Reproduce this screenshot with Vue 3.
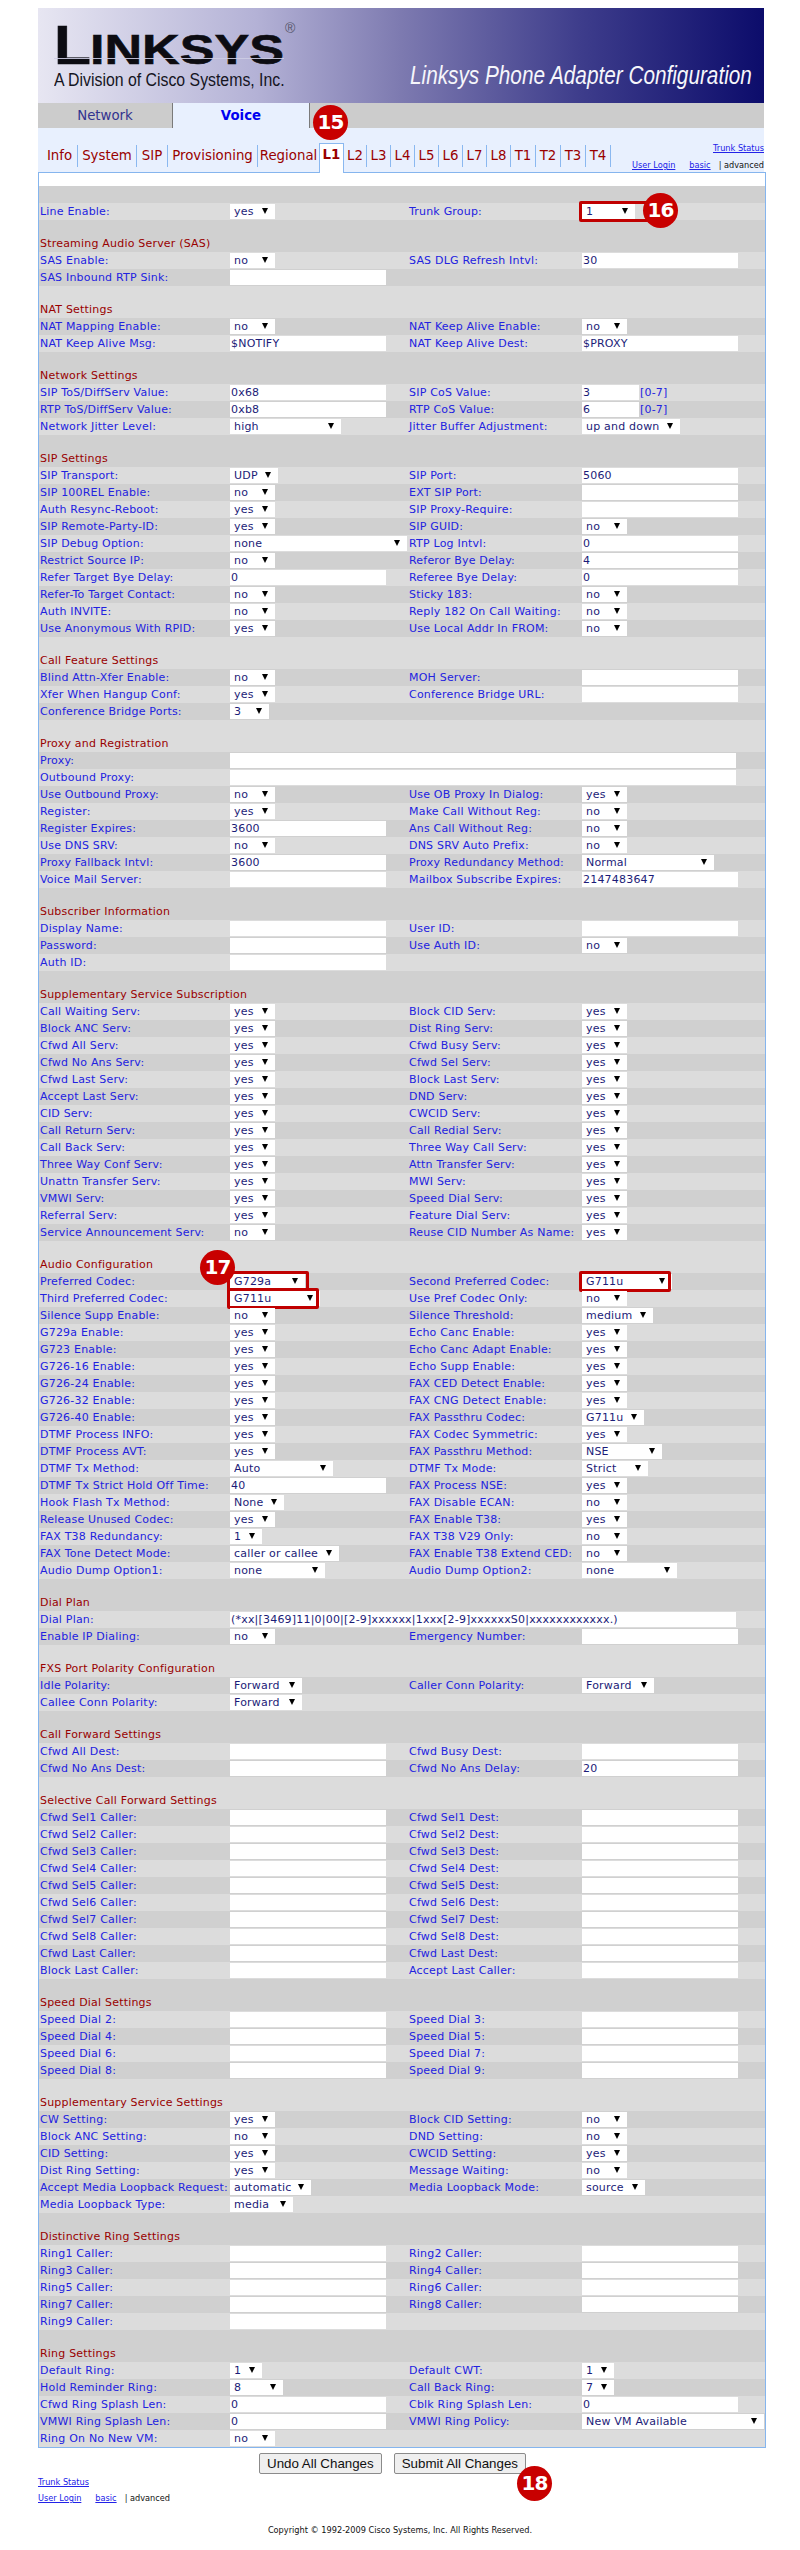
<template>
  <div class="page">
    <div class="main">
      <div class="banner">
        <div class="brand">
          <div class="logo">
            <span class="logo-l">L</span><span class="logo-rest">INKSYS</span>
            <span class="logo-reg">®</span>
            <i class="logo-cut"></i>
          </div>
          <div class="division">A Division of Cisco Systems, Inc.</div>
        </div>
        <div class="title">Linksys Phone Adapter Configuration</div>
      </div>

      <div class="top-tabs">
        <a class="top-tab">Network</a>
        <a class="top-tab active">Voice</a>
      </div>

      <div class="sub-band">
        <a
          v-for="tab in tabs"
          :key="tab.name"
          class="sub-tab"
          :class="{ active: tab.name === 'L1', plain: tab.name === 'Regional' }"
          :style="{ width: tab.w + 'px' }"
        >{{ tab.name }}</a>
        <div class="band-links">
          <div><a class="link">Trunk Status</a></div>
          <div class="band-row">
            <a class="link">User Login</a>
            <a class="link basic">basic</a>
            <span class="adv">| advanced</span>
          </div>
        </div>
      </div>

      <div class="panel">
        <div class="panel-top"></div>
        <div v-for="(row, i) in rows" :key="i" class="row" :class="{ head: row.head }">
          <div v-if="row.head" class="head-text">{{ row.head }}</div>
          <template v-else>
            <template v-for="(cell, c) in row.cells" :key="c">
              <div class="label">{{ cell.label }}</div>
              <div class="value" :class="{ span: cell.field.wide }">
                <span v-if="cell.field.kind === 's'" class="sel" :style="{ width: cell.field.w + 'px' }">
                  <select>
                    <option>{{ cell.field.v }}</option>
                  </select>
                  <i
                    v-if="cell.field.mark !== undefined"
                    class="mark"
                    :style="{ right: cell.field.mark + 'px' }"
                  ></i>
                </span>
                <template v-else>
                  <input
                    type="text"
                    :class="{ wide: cell.field.wide, short: cell.field.short }"
                    :value="cell.field.v"
                  />
                  <span v-if="cell.field.short" class="range">[0-7]</span>
                </template>
              </div>
            </template>
          </template>
        </div>
      </div>

      <div class="actions">
        <button>Undo All Changes</button>
        <button>Submit All Changes</button>
      </div>

      <div class="foot-links">
        <div><a class="link">Trunk Status</a></div>
        <div class="foot-row">
          <a class="link">User Login</a>
          <a class="link basic">basic</a>
          <span class="adv">| advanced</span>
        </div>
      </div>
    </div>

    <div class="copyright">Copyright © 1992-2009 Cisco Systems, Inc. All Rights Reserved.</div>

    <div class="badge b15">15</div>
    <div class="badge b16">16</div>
    <div class="badge b17">17</div>
    <div class="badge b18">18</div>
  </div>
</template>

<script setup>
const tabs = [
  { name: 'Info', w: 36 },
  { name: 'System', w: 59 },
  { name: 'SIP', w: 31 },
  { name: 'Provisioning', w: 90 },
  { name: 'Regional', w: 61 },
  { name: 'L1', w: 25 },
  { name: 'L2', w: 23 },
  { name: 'L3', w: 24 },
  { name: 'L4', w: 24 },
  { name: 'L5', w: 24 },
  { name: 'L6', w: 24 },
  { name: 'L7', w: 24 },
  { name: 'L8', w: 24 },
  { name: 'T1', w: 25 },
  { name: 'T2', w: 25 },
  { name: 'T3', w: 25 },
  { name: 'T4', w: 25 },
]

// field helpers
const s = (v, w = 45, mark) => ({ kind: 's', v, w, mark })
const t = (v = '') => ({ kind: 't', v })
const wide = (v = '') => ({ kind: 't', v, wide: true })
const short = (v) => ({ kind: 't', v, short: true })
const yes = s('yes')
const no = s('no')

const sections = [
  { rows: [['Line Enable', yes, 'Trunk Group', s('1', 53, -15)]] },
  {
    title: 'Streaming Audio Server (SAS)',
    rows: [
      ['SAS Enable', no, 'SAS DLG Refresh Intvl', t('30')],
      ['SAS Inbound RTP Sink', t()],
    ],
  },
  {
    title: 'NAT Settings',
    rows: [
      ['NAT Mapping Enable', no, 'NAT Keep Alive Enable', no],
      ['NAT Keep Alive Msg', t('$NOTIFY'), 'NAT Keep Alive Dest', t('$PROXY')],
    ],
  },
  {
    title: 'Network Settings',
    rows: [
      ['SIP ToS/DiffServ Value', t('0x68'), 'SIP CoS Value', short('3')],
      ['RTP ToS/DiffServ Value', t('0xb8'), 'RTP CoS Value', short('6')],
      ['Network Jitter Level', s('high', 111), 'Jitter Buffer Adjustment', s('up and down', 98)],
    ],
  },
  {
    title: 'SIP Settings',
    rows: [
      ['SIP Transport', s('UDP', 48), 'SIP Port', t('5060')],
      ['SIP 100REL Enable', no, 'EXT SIP Port', t()],
      ['Auth Resync-Reboot', yes, 'SIP Proxy-Require', t()],
      ['SIP Remote-Party-ID', yes, 'SIP GUID', no],
      ['SIP Debug Option', s('none', 177), 'RTP Log Intvl', t('0')],
      ['Restrict Source IP', no, 'Referor Bye Delay', t('4')],
      ['Refer Target Bye Delay', t('0'), 'Referee Bye Delay', t('0')],
      ['Refer-To Target Contact', no, 'Sticky 183', no],
      ['Auth INVITE', no, 'Reply 182 On Call Waiting', no],
      ['Use Anonymous With RPID', yes, 'Use Local Addr In FROM', no],
    ],
  },
  {
    title: 'Call Feature Settings',
    rows: [
      ['Blind Attn-Xfer Enable', no, 'MOH Server', t()],
      ['Xfer When Hangup Conf', yes, 'Conference Bridge URL', t()],
      ['Conference Bridge Ports', s('3', 39)],
    ],
  },
  {
    title: 'Proxy and Registration',
    rows: [
      ['Proxy', wide()],
      ['Outbound Proxy', wide()],
      ['Use Outbound Proxy', no, 'Use OB Proxy In Dialog', yes],
      ['Register', yes, 'Make Call Without Reg', no],
      ['Register Expires', t('3600'), 'Ans Call Without Reg', no],
      ['Use DNS SRV', no, 'DNS SRV Auto Prefix', no],
      ['Proxy Fallback Intvl', t('3600'), 'Proxy Redundancy Method', s('Normal', 132)],
      ['Voice Mail Server', t(), 'Mailbox Subscribe Expires', t('2147483647')],
    ],
  },
  {
    title: 'Subscriber Information',
    rows: [
      ['Display Name', t(), 'User ID', t()],
      ['Password', t(), 'Use Auth ID', no],
      ['Auth ID', t()],
    ],
  },
  {
    title: 'Supplementary Service Subscription',
    rows: [
      ['Call Waiting Serv', yes, 'Block CID Serv', yes],
      ['Block ANC Serv', yes, 'Dist Ring Serv', yes],
      ['Cfwd All Serv', yes, 'Cfwd Busy Serv', yes],
      ['Cfwd No Ans Serv', yes, 'Cfwd Sel Serv', yes],
      ['Cfwd Last Serv', yes, 'Block Last Serv', yes],
      ['Accept Last Serv', yes, 'DND Serv', yes],
      ['CID Serv', yes, 'CWCID Serv', yes],
      ['Call Return Serv', yes, 'Call Redial Serv', yes],
      ['Call Back Serv', yes, 'Three Way Call Serv', yes],
      ['Three Way Conf Serv', yes, 'Attn Transfer Serv', yes],
      ['Unattn Transfer Serv', yes, 'MWI Serv', yes],
      ['VMWI Serv', yes, 'Speed Dial Serv', yes],
      ['Referral Serv', yes, 'Feature Dial Serv', yes],
      ['Service Announcement Serv', no, 'Reuse CID Number As Name', yes],
    ],
  },
  {
    title: 'Audio Configuration',
    rows: [
      ['Preferred Codec', s('G729a', 75, -4), 'Second Preferred Codec', s('G711u', 90, 1)],
      ['Third Preferred Codec', s('G711u', 90, 1), 'Use Pref Codec Only', no],
      ['Silence Supp Enable', no, 'Silence Threshold', s('medium', 71)],
      ['G729a Enable', yes, 'Echo Canc Enable', yes],
      ['G723 Enable', yes, 'Echo Canc Adapt Enable', yes],
      ['G726-16 Enable', yes, 'Echo Supp Enable', yes],
      ['G726-24 Enable', yes, 'FAX CED Detect Enable', yes],
      ['G726-32 Enable', yes, 'FAX CNG Detect Enable', yes],
      ['G726-40 Enable', yes, 'FAX Passthru Codec', s('G711u', 62)],
      ['DTMF Process INFO', yes, 'FAX Codec Symmetric', yes],
      ['DTMF Process AVT', yes, 'FAX Passthru Method', s('NSE', 80)],
      ['DTMF Tx Method', s('Auto', 103), 'DTMF Tx Mode', s('Strict', 66)],
      ['DTMF Tx Strict Hold Off Time', t('40'), 'FAX Process NSE', yes],
      ['Hook Flash Tx Method', s('None', 54), 'FAX Disable ECAN', no],
      ['Release Unused Codec', yes, 'FAX Enable T38', yes],
      ['FAX T38 Redundancy', s('1', 32), 'FAX T38 V29 Only', no],
      ['FAX Tone Detect Mode', s('caller or callee', 109), 'FAX Enable T38 Extend CED', no],
      ['Audio Dump Option1', s('none', 95), 'Audio Dump Option2', s('none', 95)],
    ],
  },
  {
    title: 'Dial Plan',
    rows: [
      ['Dial Plan', wide('(*xx|[3469]11|0|00|[2-9]xxxxxx|1xxx[2-9]xxxxxxS0|xxxxxxxxxxxx.)')],
      ['Enable IP Dialing', no, 'Emergency Number', t()],
    ],
  },
  {
    title: 'FXS Port Polarity Configuration',
    rows: [
      ['Idle Polarity', s('Forward', 72), 'Caller Conn Polarity', s('Forward', 72)],
      ['Callee Conn Polarity', s('Forward', 72)],
    ],
  },
  {
    title: 'Call Forward Settings',
    rows: [
      ['Cfwd All Dest', t(), 'Cfwd Busy Dest', t()],
      ['Cfwd No Ans Dest', t(), 'Cfwd No Ans Delay', t('20')],
    ],
  },
  {
    title: 'Selective Call Forward Settings',
    rows: [
      ...[1, 2, 3, 4, 5, 6, 7, 8].map((n) => [`Cfwd Sel${n} Caller`, t(), `Cfwd Sel${n} Dest`, t()]),
      ['Cfwd Last Caller', t(), 'Cfwd Last Dest', t()],
      ['Block Last Caller', t(), 'Accept Last Caller', t()],
    ],
  },
  {
    title: 'Speed Dial Settings',
    rows: [
      ['Speed Dial 2', t(), 'Speed Dial 3', t()],
      ['Speed Dial 4', t(), 'Speed Dial 5', t()],
      ['Speed Dial 6', t(), 'Speed Dial 7', t()],
      ['Speed Dial 8', t(), 'Speed Dial 9', t()],
    ],
  },
  {
    title: 'Supplementary Service Settings',
    rows: [
      ['CW Setting', yes, 'Block CID Setting', no],
      ['Block ANC Setting', no, 'DND Setting', no],
      ['CID Setting', yes, 'CWCID Setting', yes],
      ['Dist Ring Setting', yes, 'Message Waiting', no],
      ['Accept Media Loopback Request', s('automatic', 81), 'Media Loopback Mode', s('source', 63)],
      ['Media Loopback Type', s('media', 63)],
    ],
  },
  {
    title: 'Distinctive Ring Settings',
    rows: [
      ['Ring1 Caller', t(), 'Ring2 Caller', t()],
      ['Ring3 Caller', t(), 'Ring4 Caller', t()],
      ['Ring5 Caller', t(), 'Ring6 Caller', t()],
      ['Ring7 Caller', t(), 'Ring8 Caller', t()],
      ['Ring9 Caller', t()],
    ],
  },
  {
    title: 'Ring Settings',
    rows: [
      ['Default Ring', s('1', 32), 'Default CWT', s('1', 32)],
      ['Hold Reminder Ring', s('8', 53), 'Call Back Ring', s('7', 32)],
      ['Cfwd Ring Splash Len', t('0'), 'Cblk Ring Splash Len', t('0')],
      ['VMWI Ring Splash Len', t('0'), 'VMWI Ring Policy', s('New VM Available', 182)],
      ['Ring On No New VM', no],
    ],
  },
]

// the grey stripes alternate over headings and fields alike, so flatten everything
const toCells = (r) => {
  const cells = [{ label: r[0] + ':', field: r[1] }]
  if (r[2]) cells.push({ label: r[2] + ':', field: r[3] })
  return cells
}

const rows = [{ cells: [] }]
sections.forEach((sec) => {
  if (sec.title) rows.push({ head: sec.title })
  sec.rows.forEach((r) => rows.push({ cells: toCells(r) }))
})
</script>

<style scoped>
.page {
  position: relative;
  width: 800px;
  height: 2550px;
  padding-top: 8px;
  box-sizing: border-box;
  overflow: hidden;
  background: #fff;
  font-family: "DejaVu Sans", Verdana, sans-serif;
}

.main {
  margin-left: 38px;
  width: 728px;
}

.banner {
  width: 726px;
  height: 95px;
  box-sizing: border-box;
  display: flex;
  justify-content: space-between;
  align-items: flex-end;
  padding: 0 12px 13px 16px;
  background: linear-gradient(90deg, #e7e6f2 0%, #b4b2d6 30%, #7d7ab0 50%, #3d3c8b 75%, #0c0c6b 100%);
}

.logo {
  position: relative;
  height: 48px;
  color: #0c0c12;
  font-family: "Liberation Sans", Arial, sans-serif;
  font-weight: bold;
  white-space: nowrap;
}

.logo-l {
  display: inline-block;
  font-size: 55px;
  line-height: 48px;
  transform: scaleX(1.1);
  transform-origin: left bottom;
  -webkit-text-stroke: 0.6px #0c0c12;
}

.logo-rest {
  display: inline-block;
  font-size: 42px;
  line-height: 48px;
  margin-left: 2px;
  transform: scaleX(1.24);
  transform-origin: left bottom;
  -webkit-text-stroke: 0.6px #0c0c12;
}

.logo-reg {
  position: absolute;
  left: 231px;
  top: -1px;
  font-size: 14px;
  line-height: 16px;
  font-weight: normal;
  color: #55556a;
}

.logo-cut {
  position: absolute;
  left: 0;
  top: 37px;
  width: 230px;
  height: 1px;
  background: rgba(205, 205, 228, 0.9);
}

.division {
  margin-top: 1px;
  width: 230px;
  font-family: "Liberation Sans", Arial, sans-serif;
  font-size: 18px;
  line-height: 20px;
  color: #15151f;
  white-space: nowrap;
  transform: scaleX(0.88);
  transform-origin: left center;
}

.title {
  font-family: "Liberation Sans", Arial, sans-serif;
  font-style: italic;
  font-size: 25px;
  line-height: 30px;
  color: #f6f6fb;
  white-space: nowrap;
  transform: scaleX(0.83);
  transform-origin: right center;
}

.top-tabs {
  display: flex;
  width: 726px;
  height: 25px;
  background: #cccccc;
}

.top-tab {
  width: 135px;
  box-sizing: border-box;
  border-right: 1px solid #7a7a7a;
  line-height: 25px;
  text-align: center;
  font-size: 13.33px;
  color: #33338f;
}

.top-tab.active {
  width: 137px;
  background: #e8f0fe;
  color: #0000f0;
  font-weight: bold;
}

.sub-band {
  position: relative;
  z-index: 1;
  display: flex;
  align-items: flex-end;
  width: 726px;
  height: 44px;
  box-sizing: border-box;
  padding-left: 4px;
  background: #e8f0fe;
}

.sub-tab {
  height: 22px;
  margin-bottom: 5px;
  box-sizing: border-box;
  border-right: 1px solid #8ab8f0;
  line-height: 22px;
  text-align: center;
  font-size: 13.33px;
  color: #990000;
  white-space: nowrap;
}

.sub-tab.plain {
  border-right: 0;
}

.sub-tab.active {
  height: 30px;
  margin-bottom: -1px;
  padding-top: 1px;
  border: 1px solid #8ab8f0;
  border-bottom: 0;
  background: #fff;
  font-weight: bold;
  line-height: 20px;
}

.band-links {
  margin-left: auto;
  margin-bottom: 1px;
  text-align: right;
  font-size: 8.2px;
  line-height: 12px;
}

.band-row {
  margin-top: 5px;
}

.link {
  color: #2222e8;
  text-decoration: underline;
}

.basic {
  margin-left: 14px;
}

.adv {
  margin-left: 8px;
  color: #111;
}

.panel {
  border: 1px solid #85b5ee;
}

.panel-top {
  height: 13px;
  background: #fff;
}

.row {
  display: grid;
  grid-template-columns: 191px 178px 174px 183px;
  height: 17px;
  background: #dcdcdc;
  align-items: center;
  font-size: 11px;
  letter-spacing: 0.2px;
}

.row:nth-child(even) {
  background: #d0d0d0;
}

.row.head {
  height: 32px;
  align-items: end;
}

.head-text {
  grid-column: 1 / -1;
  padding: 0 0 1px 1px;
  line-height: 15px;
  color: #990000;
  white-space: nowrap;
}

.label {
  padding-left: 1px;
  color: #2222e0;
  white-space: nowrap;
}

.value {
  display: flex;
  align-items: center;
  height: 15px;
}

.value.span {
  grid-column: span 3;
}

.sel {
  position: relative;
  display: block;
  height: 15px;
}

.sel::after {
  content: "";
  position: absolute;
  right: 7px;
  top: 4px;
  border-left: 3px solid transparent;
  border-right: 3px solid transparent;
  border-top: 6px solid #000;
}

select,
input {
  display: block;
  height: 15px;
  margin: 0;
  border: 0;
  border-radius: 0;
  outline: 0;
  background: #fff;
  color: #1c1c78;
  font-family: inherit;
  font-size: 11px;
  letter-spacing: 0.2px;
  box-sizing: border-box;
}

select {
  width: 100%;
  padding: 0 0 0 4px;
  appearance: none;
}

input {
  width: 156px;
  padding: 0 1px;
}

input.wide {
  width: 506px;
}

input.short {
  width: 57px;
}

.range {
  margin-left: 1px;
  color: #2222e0;
}

.mark {
  position: absolute;
  left: -3px;
  top: -3px;
  bottom: -3px;
  border: 3px solid #c00000;
  border-radius: 2px;
}

.actions {
  display: flex;
  gap: 12px;
  padding: 5px 0 0 221px;
}

button {
  height: 21px;
  padding: 0 7px;
  border: 1px solid #8b8b8b;
  border-radius: 2px;
  background: #efefef;
  color: #111;
  font-family: "Liberation Sans", Arial, sans-serif;
  font-size: 13.33px;
}

.foot-links {
  margin-top: 2px;
  font-size: 8.2px;
  line-height: 12px;
}

.foot-row {
  margin-top: 4px;
}

.copyright {
  margin-top: 20px;
  text-align: center;
  font-size: 8.2px;
  line-height: 12px;
  color: #111;
}

.badge {
  position: absolute;
  z-index: 2;
  width: 35px;
  height: 35px;
  border-radius: 50%;
  background: #c80000;
  color: #fff;
  font-size: 20px;
  font-weight: bold;
  letter-spacing: -1px;
  line-height: 35px;
  text-align: center;
}

.b15 { left: 313px; top: 105px; }
.b16 { left: 643px; top: 193px; }
.b17 { left: 200px; top: 1250px; }
.b18 { left: 517px; top: 2466px; }
</style>
